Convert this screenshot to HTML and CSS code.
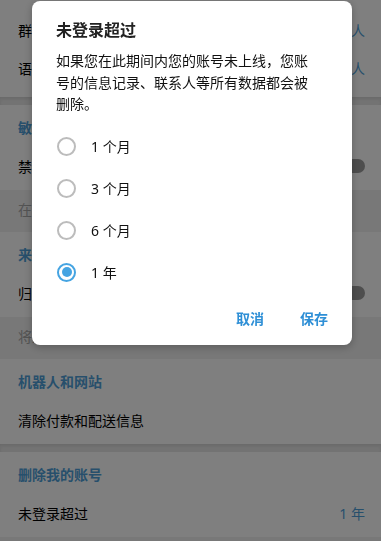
FILE: index.html
```html
<!DOCTYPE html>
<html>
<head>
    <meta charset="UTF-8">
    <link rel="stylesheet" href="styles.css">
</head>
<body>
    <div class="settings">
        <section class="group first">
            <div class="row"><span>群组和频道</span><span class="row-value">我的联系人</span></div>
            <div class="row"><span>语音通话</span><span class="row-value">我的联系人</span></div>
        </section>
        <div class="gap"></div>
        <section class="group">
            <div class="group-title">敏感内容</div>
            <div class="row"><span>禁用过滤</span><span class="toggle"></span></div>
        </section>
        <div class="hint">在您所有设备上显示敏感媒体内容，不进行模糊处理。</div>
        <section class="group">
            <div class="group-title">来自新用户的聊天</div>
            <div class="row"><span>归档并静音非联系人的新聊天</span><span class="toggle"></span></div>
        </section>
        <div class="hint">将来自非联系人的新聊天自动归档并静音。</div>
        <section class="group">
            <div class="group-title">机器人和网站</div>
            <div class="row"><span>清除付款和配送信息</span></div>
        </section>
        <div class="gap"></div>
        <section class="group">
            <div class="group-title">删除我的账号</div>
            <div class="row"><span>未登录超过</span><span class="row-value">1 年</span></div>
        </section>
    </div>

    <div class="overlay">
        <div class="dialog">
            <div class="dialog-title">未登录超过</div>
            <div class="dialog-text">如果您在此期间内您的账号未上线，您账号的信息记录、联系人等所有数据都会被删除。</div>
            <div class="options">
                <label class="option"><span class="radio"></span><span>1 个月</span></label>
                <label class="option"><span class="radio"></span><span>3 个月</span></label>
                <label class="option"><span class="radio"></span><span>6 个月</span></label>
                <label class="option"><span class="radio checked"></span><span>1 年</span></label>
            </div>
            <div class="actions">
                <button class="action-btn">取消</button>
                <button class="action-btn">保存</button>
            </div>
        </div>
    </div>
</body>
</html>
```

FILE: styles.css
```css
body {
    margin: 0;
    font-family: "Noto Sans", "Noto Sans CJK SC", sans-serif;
    font-size: 14px;
    color: #000;
    background-color: #f0f0f0;
    overflow: hidden;
}
.settings {
    width: 381px;
}
.group {
    background-color: #fff;
    padding-bottom: 0;
}
.group.first {
    padding: 11px 0 10px;
}
.group.first .row {
    height: 38px;
}
.group-title {
    padding: 13px 18px 3px;
    line-height: 20px;
    font-weight: bold;
    color: #4f9fd8;
}
.row {
    display: flex;
    justify-content: space-between;
    align-items: center;
    height: 49px;
    padding: 0 16px 0 18px;
    white-space: nowrap;
}
.row-value {
    color: #4f9fd8;
}
.toggle {
    width: 34px;
    height: 14px;
    border-radius: 7px;
    background-color: #9c9c9c;
}
.gap {
    height: 8px;
    background-color: #e6e6e6;
    box-shadow: inset 0 2px 3px rgba(0, 0, 0, 0.08);
}
.hint {
    padding: 10px 18px 12px;
    line-height: 20px;
    color: #a8a8a8;
    white-space: nowrap;
    overflow: hidden;
}
.overlay {
    position: fixed;
    top: 0;
    left: 0;
    right: 0;
    bottom: 0;
    background-color: rgba(0, 0, 0, 0.5);
    padding: 1px 0 0 32px;
}
.dialog {
    width: 320px;
    box-sizing: border-box;
    background-color: #fff;
    border-radius: 8px;
    padding: 18px 24px 9px;
    box-shadow: 0 2px 8px rgba(0, 0, 0, 0.25);
}
.dialog-title {
    font-size: 16px;
    line-height: 22px;
    font-weight: 600;
    color: #222;
    margin-bottom: 9px;
}
.dialog-text {
    width: 258px;
    line-height: 21.5px;
    color: #111;
}
.options {
    margin-top: 10.5px;
}
.option {
    display: flex;
    align-items: center;
    height: 42px;
    gap: 15px;
    color: #111;
}
.radio {
    width: 19px;
    height: 19px;
    box-sizing: border-box;
    border: 2px solid #bcbcbc;
    border-radius: 50%;
    margin-left: 1px;
    position: relative;
}
.radio.checked {
    border-color: #45a4e2;
}
.radio.checked::after {
    content: "";
    position: absolute;
    left: 2.5px;
    top: 2.5px;
    width: 10px;
    height: 10px;
    border-radius: 50%;
    background-color: #45a4e2;
}
.actions {
    display: flex;
    justify-content: flex-end;
    gap: 36px;
    margin-top: 7px;
}
.action-btn {
    height: 36px;
    padding: 0;
    border: none;
    background: none;
    font-family: inherit;
    font-size: 14px;
    font-weight: bold;
    color: #2e8fd6;
    cursor: pointer;
}
```
